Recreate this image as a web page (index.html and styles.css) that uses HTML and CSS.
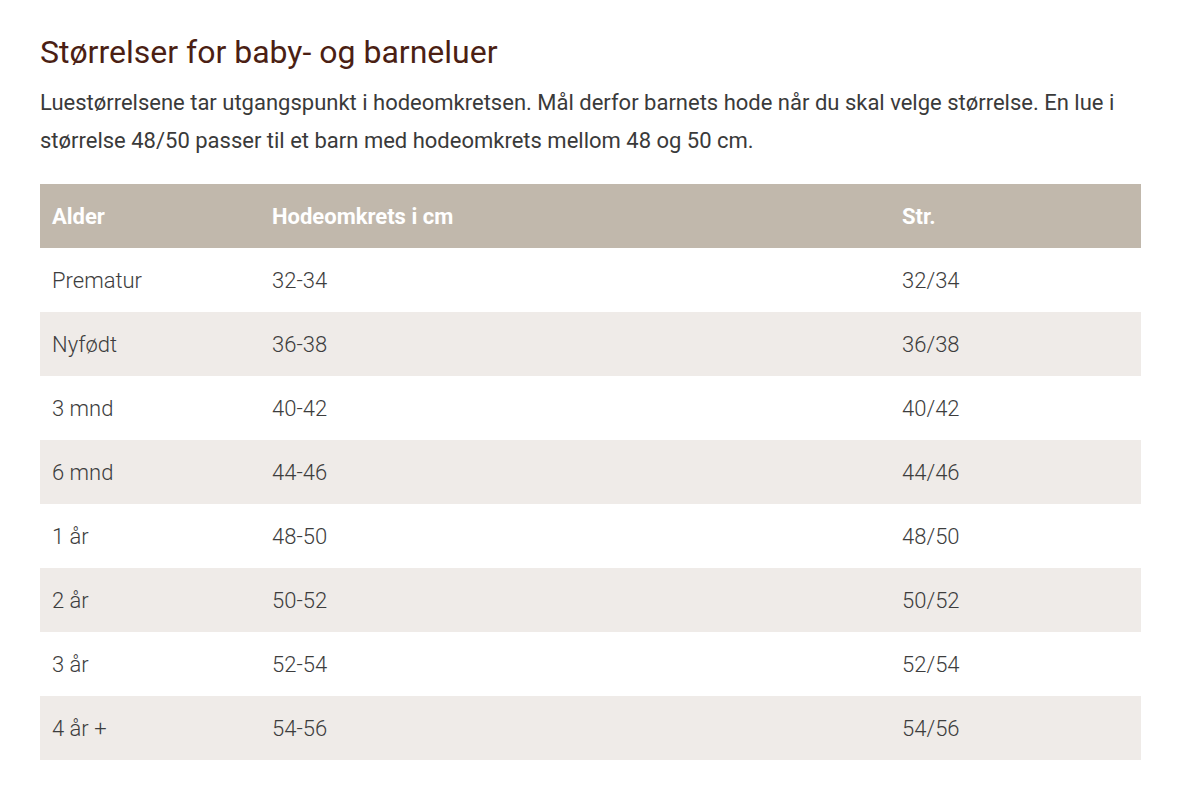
FILE: index.html
```html
<!DOCTYPE html>
<html lang="no">
<head>
<meta charset="utf-8">
<link rel="stylesheet" href="styles.css">
</head>
<body>
<main class="page">
  <h1 class="title">Størrelser for baby- og barneluer</h1>
  <p class="intro">Luestørrelsene tar utgangspunkt i hodeomkretsen. Mål derfor barnets hode når du skal velge størrelse. En lue i størrelse 48/50 passer til et barn med hodeomkrets mellom 48 og 50 cm.</p>
  <table class="sizes">
    <thead>
      <tr><th class="c1">Alder</th><th class="c2">Hodeomkrets i cm</th><th class="c3">Str.</th></tr>
    </thead>
    <tbody>
      <tr><td>Prematur</td><td>32-34</td><td>32/34</td></tr>
      <tr><td>Nyfødt</td><td>36-38</td><td>36/38</td></tr>
      <tr><td>3 mnd</td><td>40-42</td><td>40/42</td></tr>
      <tr><td>6 mnd</td><td>44-46</td><td>44/46</td></tr>
      <tr><td>1 år</td><td>48-50</td><td>48/50</td></tr>
      <tr><td>2 år</td><td>50-52</td><td>50/52</td></tr>
      <tr><td>3 år</td><td>52-54</td><td>52/54</td></tr>
      <tr><td>4 år +</td><td>54-56</td><td>54/56</td></tr>
    </tbody>
  </table>
</main>
</body>
</html>
```
FILE: styles.css
```css
html, body {
  margin: 0;
  padding: 0;
  background: #ffffff;
}
body {
  font-family: Roboto, "Liberation Sans", sans-serif;
  color: #3b3b3b;
}
.page {
  padding: 30px 59px 40px 40px;
}
.title {
  margin: 0;
  font-size: 32px;
  line-height: 44px;
  font-weight: 400;
  color: #4b1f14;
}
.intro {
  margin: 10px 0 24px;
  font-size: 22px;
  line-height: 38px;
  font-weight: 400;
  color: #3a3a3a;
}
.sizes {
  width: 1101px;
  border-collapse: collapse;
  font-size: 22px;
}
.sizes th, .sizes td {
  height: 64px;
  padding: 0 12px;
  text-align: left;
  vertical-align: middle;
  box-sizing: border-box;
}
.sizes th {
  background: #c1b8ac;
  color: #ffffff;
  font-weight: 700;
}
.sizes td {
  color: #3d3d3d;
  font-weight: 300;
}
.c1 { width: 220px; }
.c2 { width: 630px; }
.c3 { width: 251px; }
.sizes tbody tr:nth-child(even) td {
  background: #efebe8;
}
```
